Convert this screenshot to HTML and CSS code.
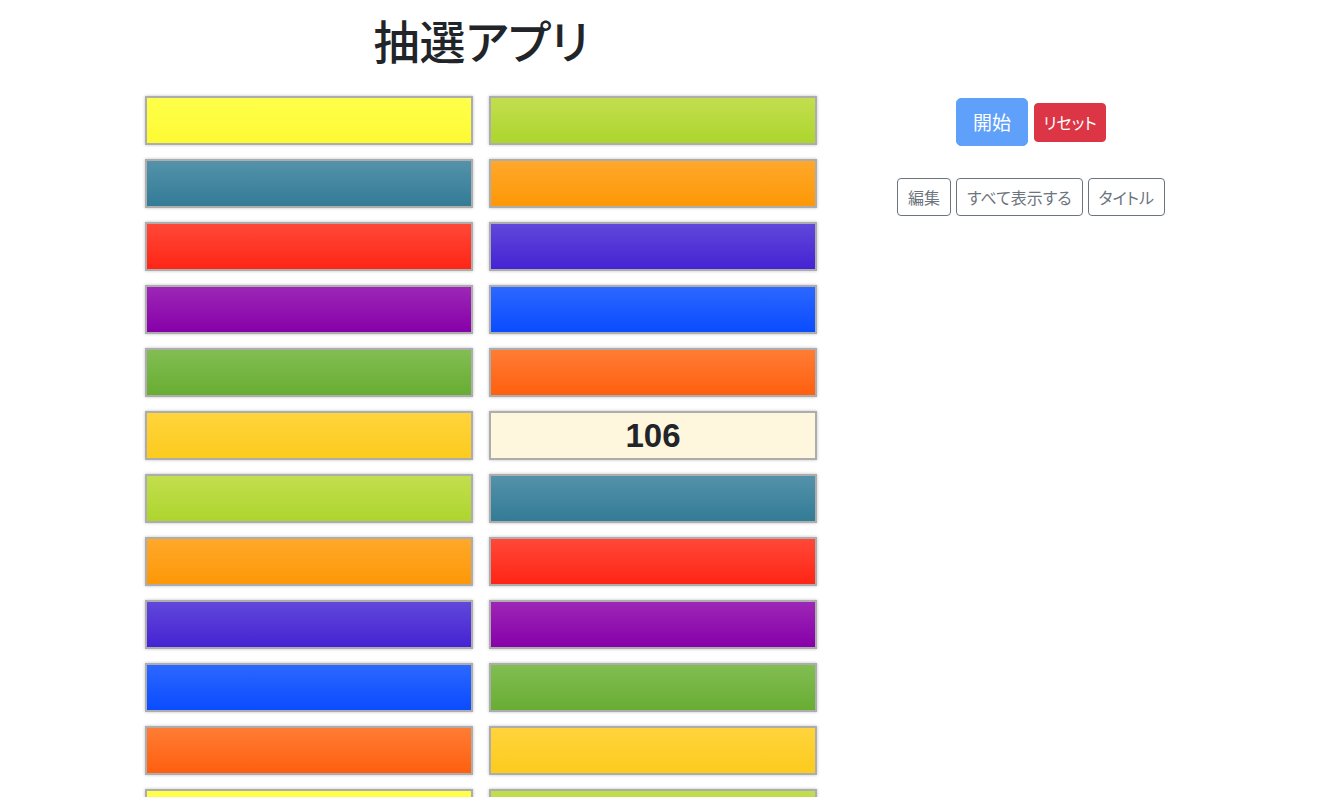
FILE: index.html
```html
<!DOCTYPE html>
<html lang="ja">
<head>
<meta charset="utf-8">
<title>抽選アプリ</title>
<link rel="stylesheet" href="styles.css">
</head>
<body>
<div class="page">
  <main class="board">
    <h1 class="title">抽選アプリ</h1>
    <div class="grid">
      <div class="card c-yellow"></div>
      <div class="card c-yellowgreen"></div>
      <div class="card c-steel"></div>
      <div class="card c-orange"></div>
      <div class="card c-red"></div>
      <div class="card c-indigo"></div>
      <div class="card c-purple"></div>
      <div class="card c-blue"></div>
      <div class="card c-green"></div>
      <div class="card c-orangered"></div>
      <div class="card c-gold"></div>
      <div class="card open">106</div>
      <div class="card c-yellowgreen"></div>
      <div class="card c-steel"></div>
      <div class="card c-orange"></div>
      <div class="card c-red"></div>
      <div class="card c-indigo"></div>
      <div class="card c-purple"></div>
      <div class="card c-blue"></div>
      <div class="card c-green"></div>
      <div class="card c-orangered"></div>
      <div class="card c-gold"></div>
      <div class="card c-yellow"></div>
      <div class="card c-yellowgreen"></div>
    </div>
  </main>
  <aside class="controls">
    <div class="btn-row main-row">
      <button class="btn btn-start">開始</button>
      <button class="btn btn-reset">リセット</button>
    </div>
    <div class="btn-row sub-row">
      <button class="btn btn-outline">編集</button>
      <button class="btn btn-outline">すべて表示する</button>
      <button class="btn btn-outline">タイトル</button>
    </div>
  </aside>
</div>
</body>
</html>
```
FILE: styles.css
```css
html {
  scrollbar-width: none;
}
body {
  margin: 0;
  background: #fff;
  color: #212529;
  font-family: "Noto Sans CJK JP", "Noto Sans", sans-serif;
}
.page {
  display: flex;
  align-items: flex-start;
  padding-left: 145px;
}
.board {
  width: 672px;
}
.title {
  margin: 12px 0 29px;
  font-size: 46px;
  line-height: 55px;
  font-weight: 500;
  text-align: center;
  color: #212529;
  font-feature-settings: "palt";
}
.grid {
  display: grid;
  grid-template-columns: 328px 328px;
  column-gap: 16px;
  row-gap: 14px;
}
.card {
  box-sizing: border-box;
  height: 49px;
  border: 2px solid #adadad;
  box-shadow: 0 0 3px rgba(0, 0, 0, 0.25);
}
.open {
  background: #fff6de;
  font-family: "Liberation Sans", Arial, sans-serif;
  font-weight: 700;
  font-size: 33px;
  line-height: 45px;
  text-align: center;
  color: #212529;
}
.c-yellow { background: linear-gradient(#ffff4a, #fdfa33); }
.c-yellowgreen { background: linear-gradient(#c2de4e, #add52e); }
.c-steel { background: linear-gradient(#5492aa, #337b96); }
.c-orange { background: linear-gradient(#ffa82a, #fd9807); }
.c-red { background: linear-gradient(#ff4838, #ff2515); }
.c-indigo { background: linear-gradient(#6147da, #4523d3); }
.c-purple { background: linear-gradient(#9c27b6, #8700a9); }
.c-blue { background: linear-gradient(#2c67ff, #0a4cff); }
.c-green { background: linear-gradient(#82bd52, #68ad33); }
.c-orangered { background: linear-gradient(#ff7c34, #ff5f0f); }
.c-gold { background: linear-gradient(#ffd43c, #fccb1e); }

.controls {
  width: 428px;
  display: flex;
  flex-direction: column;
  align-items: center;
  padding-top: 98px;
}
.btn-row {
  display: flex;
  align-items: center;
  justify-content: center;
}
.main-row {
  gap: 6px;
}
.sub-row {
  gap: 5px;
  margin-top: 32px;
}
.btn {
  font-family: "Noto Sans CJK JP", "Noto Sans", sans-serif;
  font-feature-settings: "palt";
  border: 1px solid transparent;
  border-radius: 4px;
  cursor: pointer;
  margin: 0;
}
.btn-start {
  background: #5fa0fa;
  border-color: #5fa0fa;
  color: #fff;
  font-size: 19px;
  line-height: 27px;
  padding: 9px 0 10px;
  border-radius: 5px;
  width: 72px;
}
.btn-reset {
  background: #dc3545;
  border-color: #dc3545;
  color: #fff;
  font-size: 16px;
  line-height: 23px;
  padding: 7px 0;
  width: 72px;
}
.btn-outline {
  background: #fff;
  border-color: #6c757d;
  color: #6c757d;
  font-size: 16px;
  line-height: 24px;
  padding: 6px 10px;
}
```
